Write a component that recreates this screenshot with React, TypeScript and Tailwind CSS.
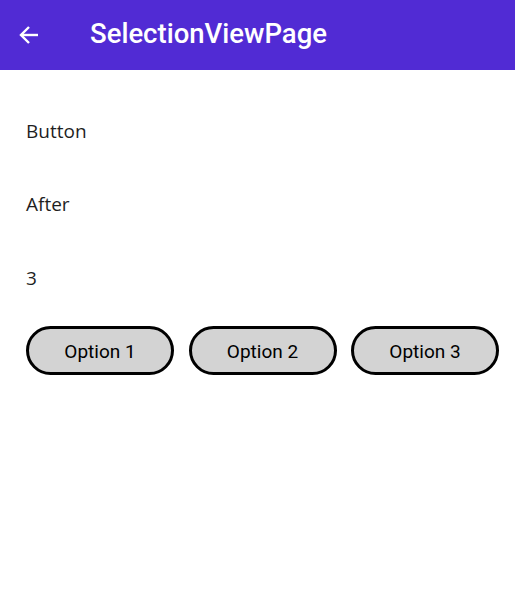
export default function App() {
  const options = ["Option 1", "Option 2", "Option 3"];
  return (
    <div className="h-[591px] w-[515px] bg-white">
      <header className="flex h-[70px] items-center bg-[#512bd4] text-white">
        <div className="ml-[17px] flex h-6 w-6 items-center justify-center">
          <svg viewBox="0 0 24 24" className="h-6 w-6" fill="none" stroke="currentColor" strokeWidth={2.4} strokeLinecap="butt">
            <path d="M21 12H4" />
            <path d="M12 4l-8 8 8 8" />
          </svg>
        </div>
        <h1 className="ml-[49px] -mt-[2px] font-['Roboto',sans-serif] text-[27.5px] font-medium">SelectionViewPage</h1>
      </header>
      <main className="flex flex-col pl-[26px] pr-[16px] pt-[40px] font-['Open_Sans',sans-serif] text-[19px] text-[#1f1f1f]">
        <div className="flex h-[74px] items-start leading-[40px]">
          <span className="mt-[1px]">Button</span>
        </div>
        <div className="flex h-[74px] items-start leading-[40px]">After</div>
        <div className="flex h-[68px] items-start leading-[40px]">3</div>
        <div className="flex gap-[14.5px] font-['Roboto',sans-serif] text-[19px] text-black">
          {options.map((o) => (
            <button
              key={o}
              className="flex h-[49px] w-[148px] shrink-0 items-center justify-center rounded-full border-[3px] border-black bg-[#d3d3d3] pt-[3px]"
            >
              {o}
            </button>
          ))}
        </div>
      </main>
    </div>
  );
}
